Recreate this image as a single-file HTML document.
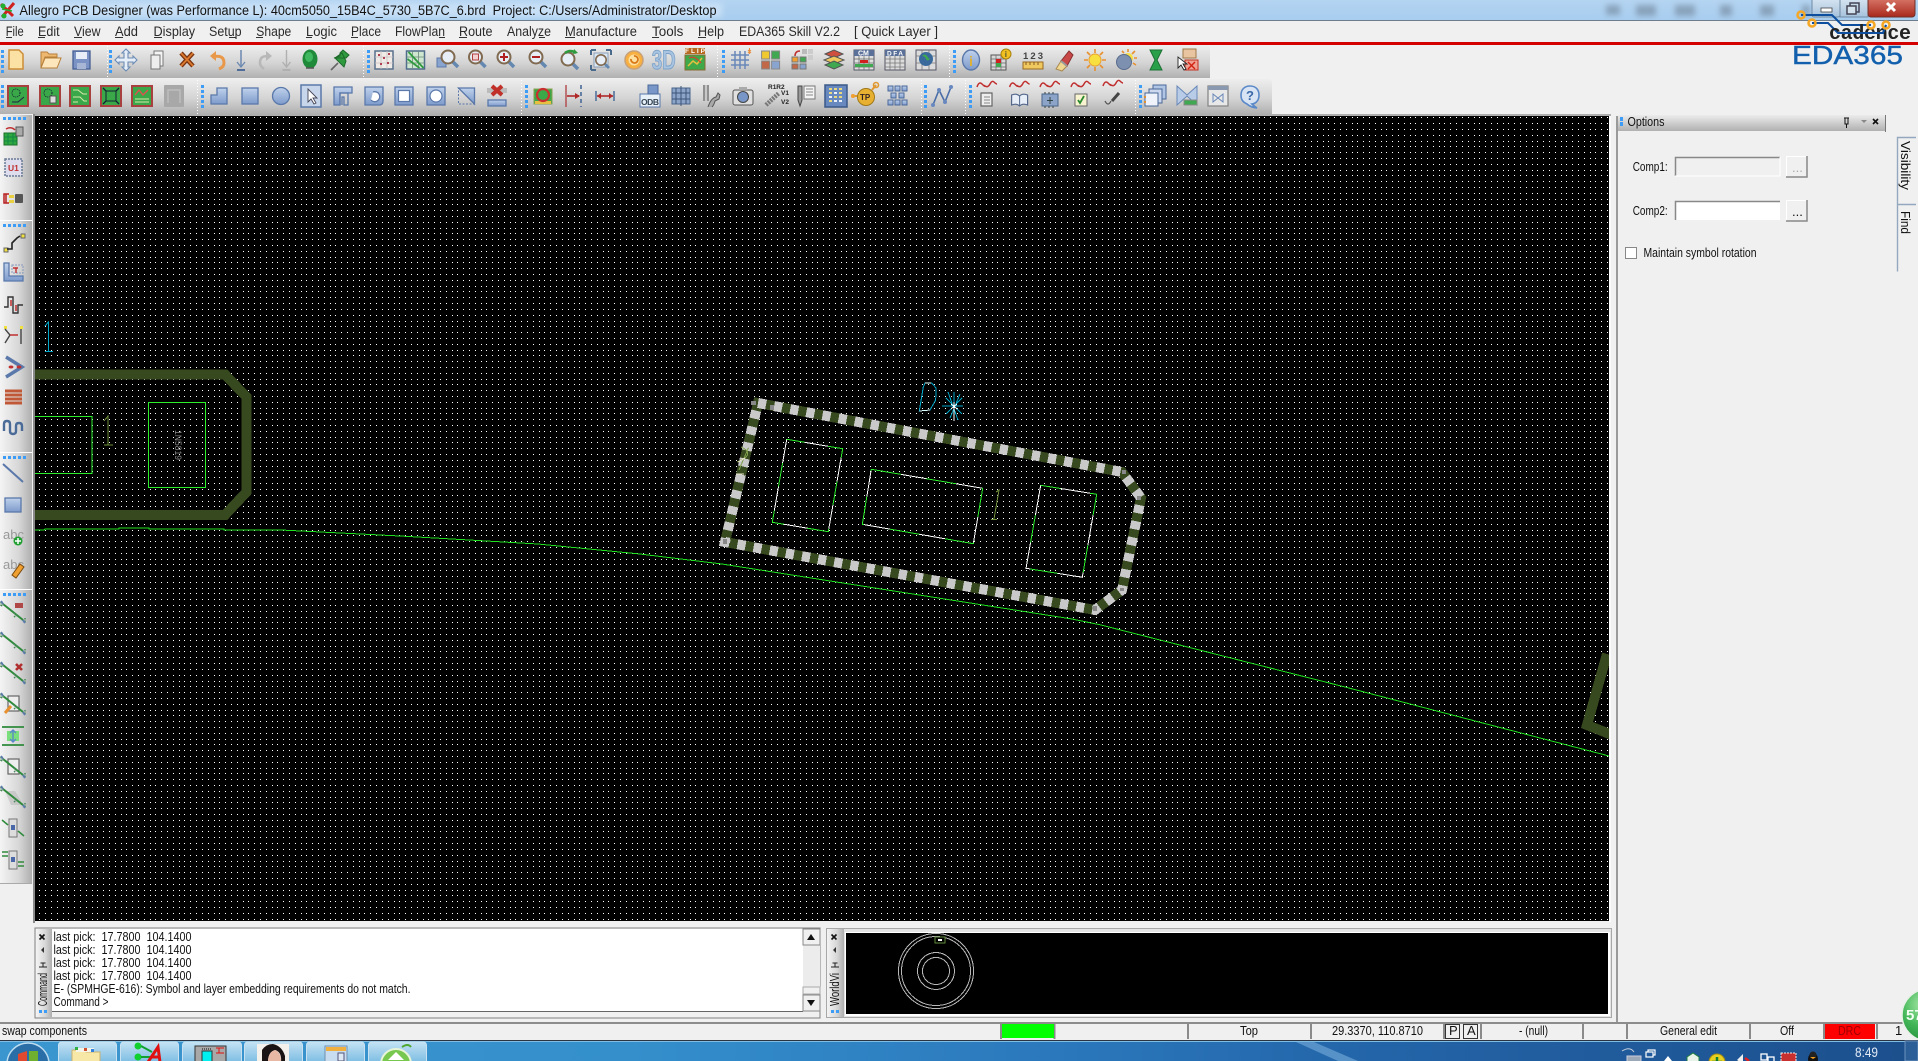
<!DOCTYPE html>
<html><head><meta charset="utf-8"><title>Allegro PCB Designer</title>
<style>
html,body{margin:0;padding:0;background:#f0f0f0;width:1918px;height:1061px;overflow:hidden}
svg{display:block;position:absolute;left:0;top:0}
text{font-family:"Liberation Sans",sans-serif;font-size:13px;fill:#111;white-space:pre}
.m{font-size:13.500px;fill:#2a2a2a}
.b{fill:url(#bl);stroke:#5a78aa;stroke-width:1.3}
.w{fill:#fff;stroke:#5a78aa;stroke-width:1.2}
.g{fill:#3aa848;stroke:#a84040;stroke-width:2}
.n{fill:none;stroke:#2f8a3c;stroke-width:1.2}
.sep{stroke:#8a8a8a;stroke-width:2}
.grip{fill:#3c9cf6}
.dot{stroke:#fff;stroke-width:1;stroke-dasharray:1 2}
.wave{fill:none;stroke:#c03030;stroke-width:1.5}
.doc{fill:#eee;stroke:#666;stroke-width:1.2}
.tb{fill:url(#tbtn);stroke:#c8e2f2;stroke-width:1}
</style></head><body>
<svg width="1918" height="1061" viewBox="0 0 1918 1061" xmlns="http://www.w3.org/2000/svg">
<defs>
<linearGradient id="tt" x1="0" y1="0" x2="0" y2="1"><stop offset="0" stop-color="#b4d4f1"/><stop offset="1" stop-color="#a8cdef"/></linearGradient>
<linearGradient id="tg" x1="0" y1="0" x2="0" y2="1"><stop offset="0" stop-color="#eeeeee"/><stop offset=".55" stop-color="#d4d4d4"/><stop offset="1" stop-color="#b0b0b0"/></linearGradient>
<linearGradient id="lg" x1="0" y1="0" x2="1" y2="0"><stop offset="0" stop-color="#f4f4f4"/><stop offset=".6" stop-color="#d6d6d6"/><stop offset="1" stop-color="#aeaeae"/></linearGradient>
<linearGradient id="hd" x1="0" y1="0" x2="0" y2="1"><stop offset="0" stop-color="#ececec"/><stop offset="1" stop-color="#b0b0b0"/></linearGradient>
<linearGradient id="bl" x1="0" y1="0" x2="0" y2="1"><stop offset="0" stop-color="#c0d2ec"/><stop offset="1" stop-color="#7d9acb"/></linearGradient>
<linearGradient id="task" x1="0" y1="0" x2="1" y2="0"><stop offset="0" stop-color="#3b96cf"/><stop offset=".33" stop-color="#348fcb"/><stop offset=".55" stop-color="#2b78bc"/><stop offset=".72" stop-color="#2364a8"/><stop offset="1" stop-color="#1c4f8c"/></linearGradient>
<linearGradient id="tbtn" x1="0" y1="0" x2="0" y2="1"><stop offset="0" stop-color="#c4e2f4"/><stop offset="1" stop-color="#6fb6df"/></linearGradient>
<linearGradient id="cls" x1="0" y1="0" x2="0" y2="1"><stop offset="0" stop-color="#d8786a"/><stop offset="1" stop-color="#a8281c"/></linearGradient>
<linearGradient id="wb" x1="0" y1="0" x2="0" y2="1"><stop offset="0" stop-color="#d8e6f2"/><stop offset="1" stop-color="#a6c2dc"/></linearGradient>
<radialGradient id="ball" cx=".4" cy=".3" r=".8"><stop offset="0" stop-color="#a8e8a8"/><stop offset=".5" stop-color="#45b85a"/><stop offset="1" stop-color="#1f8a38"/></radialGradient>
<filter id="bf" x="-30%" y="-80%" width="160%" height="260%"><feGaussianBlur stdDeviation="3"/></filter>
<pattern id="grid" x="39" y="117" width="180" height="180" patternUnits="userSpaceOnUse">
<path shape-rendering="crispEdges" fill="none" stroke="#fff" stroke-width="1" stroke-dasharray="1 5 1 5 1 5 1 5 1 4 1 5 1 5 1 5 1 5 1 4 1 5 1 5 1 5 1 5 1 4 1 5 1 5 1 5 1 5 1 4 1 5 1 5 1 5 1 5 1 4 1 5 1 5 1 5 1 5 1 5 1 4" d="M0 .5h180M0 6.5h180M0 12.5h180M0 18.5h180M0 24.5h180M0 29.5h180M0 35.5h180M0 41.5h180M0 47.5h180M0 53.5h180M0 58.5h180M0 64.5h180M0 70.5h180M0 76.5h180M0 82.5h180M0 87.5h180M0 93.5h180M0 99.5h180M0 105.5h180M0 111.5h180M0 116.5h180M0 122.5h180M0 128.5h180M0 134.5h180M0 140.5h180M0 145.5h180M0 151.5h180M0 157.5h180M0 163.5h180M0 169.5h180M0 174.5h180"/>
</pattern>
<clipPath id="cv"><rect x="35" y="116" width="1574" height="805"/></clipPath>
<clipPath id="tk"><rect x="0" y="1041" width="1918" height="20"/></clipPath>
<g id="net"><line x1="-10" y1="-8" x2="10" y2="8" stroke="#2f8a3c" stroke-width="2"/><path d="M-12 -10l3 3m-3 1l3 -2m10 9l3 3m-3 1l4 -3M-12 -10v4M12 6v5" stroke="#4a8a5a" stroke-width="1.5" fill="none" stroke-dasharray="1.5 1"/><line x1="10" y1="8" x2="12" y2="11" stroke="#5a7aa8" stroke-width="2"/><line x1="-10" y1="-8" x2="-12" y2="-11" stroke="#5a7aa8" stroke-width="2"/></g>
<g id="mag"><line x1="4" y1="4" x2="10" y2="10" stroke="#6488b0" stroke-width="3.5"/><circle r="6.5" fill="#e8eef6" stroke="#806a50" stroke-width="2"/></g>
<g id="wv"><path class="wave" d="M-10 -5q2 -6 5 -3t3 2q3 2 5 -2t4 -2t3 2"/></g>
</defs>

<!-- title bar -->
<rect width="1918" height="20" fill="url(#tt)"/>
<rect x="0" y="3" width="722" height="14" fill="#c8e0f6" filter="url(#bf)"/>
<g fill="#6a7d90" opacity=".55" filter="url(#bf)"><rect x="1606" y="5" width="14" height="10"/><rect x="1636" y="5" width="20" height="11"/><rect x="1675" y="5" width="20" height="11"/><rect x="1720" y="5" width="12" height="11"/><rect x="1760" y="5" width="14" height="11"/><rect x="1802" y="5" width="8" height="11"/></g>
<rect y="20" width="1918" height="1" fill="#6d7d8d"/>
<g transform="translate(8,10)"><path d="M-7 -6l12 12M6 -7L-6 7" stroke="#d02020" stroke-width="3"/><circle cx="-5" cy="-4" r="2.5" fill="#20b030"/><circle cx="-4" cy="6" r="2.5" fill="#20b030"/><path d="M-6 -1l10 2" stroke="#20b030" stroke-width="1.5"/></g>
<text x="19.5" y="15" style="font-size:13.500px;fill:#111" textLength="697" lengthAdjust="spacingAndGlyphs">Allegro PCB Designer (was Performance L): 40cm5050_15B4C_5730_5B7C_6.brd  Project: C:/Users/Administrator/Desktop</text>
<!-- window controls -->
<rect x="1812" y="-2" width="28" height="19" rx="2" fill="url(#wb)" stroke="#6f8aa4"/>
<rect x="1821" y="8" width="11" height="4" fill="#fff" stroke="#444" stroke-width=".8"/>
<rect x="1840" y="-2" width="28" height="19" fill="url(#wb)" stroke="#6f8aa4"/>
<rect x="1850" y="3" width="9" height="9" fill="none" stroke="#445" stroke-width="1.5"/><rect x="1847" y="6" width="9" height="8" fill="#d4e2ee" stroke="#445" stroke-width="1.5"/>
<rect x="1868" y="-2" width="47" height="19" rx="3" fill="url(#cls)" stroke="#70302a"/>
<path d="M1887 3l8 8M1895 3l-8 8" stroke="#fff" stroke-width="3"/>

<!-- menu -->
<rect y="21" width="1918" height="21" fill="#f0f0f0"/>
<g class="mm">
<text class="m" x="5.7" y="36" textLength="18" lengthAdjust="spacingAndGlyphs">File</text>
<text class="m" x="38" y="36" textLength="21.6" lengthAdjust="spacingAndGlyphs">Edit</text>
<text class="m" x="74" y="36" textLength="26.5" lengthAdjust="spacingAndGlyphs">View</text>
<text class="m" x="115" y="36" textLength="23" lengthAdjust="spacingAndGlyphs">Add</text>
<text class="m" x="153.5" y="36" textLength="41.6" lengthAdjust="spacingAndGlyphs">Display</text>
<text class="m" x="209" y="36" textLength="32.6" lengthAdjust="spacingAndGlyphs">Setup</text>
<text class="m" x="256.3" y="36" textLength="35" lengthAdjust="spacingAndGlyphs">Shape</text>
<text class="m" x="306" y="36" textLength="31" lengthAdjust="spacingAndGlyphs">Logic</text>
<text class="m" x="351" y="36" textLength="30" lengthAdjust="spacingAndGlyphs">Place</text>
<text class="m" x="395" y="36" textLength="50" lengthAdjust="spacingAndGlyphs">FlowPlan</text>
<text class="m" x="459" y="36" textLength="33.5" lengthAdjust="spacingAndGlyphs">Route</text>
<text class="m" x="507" y="36" textLength="44" lengthAdjust="spacingAndGlyphs">Analyze</text>
<text class="m" x="565" y="36" textLength="72" lengthAdjust="spacingAndGlyphs">Manufacture</text>
<text class="m" x="652" y="36" textLength="31.4" lengthAdjust="spacingAndGlyphs">Tools</text>
<text class="m" x="698" y="36" textLength="26" lengthAdjust="spacingAndGlyphs">Help</text>
<text class="m" x="739" y="36" textLength="101" lengthAdjust="spacingAndGlyphs">EDA365 Skill V2.2</text>
<text class="m" x="854" y="36" textLength="84" lengthAdjust="spacingAndGlyphs">[ Quick Layer ]</text>
</g>
<path stroke="#333" stroke-width="1" shape-rendering="crispEdges" d="M6 37.5h6M38 37.5h7M74 37.5h8M115 37.5h8M154 37.5h8M229 37.5h7M256 37.5h7M306 37.5h6M351 37.5h7M439 37.5h6M459 37.5h8M539 37.5h6M565 37.5h10M652 37.5h7M698 37.5h8"/>
<rect y="42" width="1918" height="3" fill="#d40000"/>

<!-- toolbars bg -->
<path d="M0 45H1206q4 0 4 4V78H0z" fill="url(#tg)"/>
<path d="M0 79H1268q4 0 4 4V114H0z" fill="url(#tg)"/>
<g class="dot" shape-rendering="crispEdges"><line x1="107.5" y1="46" x2="107.5" y2="78" class="dot"/><line x1="363.5" y1="46" x2="363.5" y2="78" class="dot"/><line x1="717.5" y1="46" x2="717.5" y2="78" class="dot"/><line x1="949.5" y1="46" x2="949.5" y2="78" class="dot"/><line x1="197.5" y1="80" x2="197.5" y2="114" class="dot"/><line x1="521.5" y1="80" x2="521.5" y2="114" class="dot"/><line x1="921.5" y1="80" x2="921.5" y2="114" class="dot"/><line x1="965.5" y1="80" x2="965.5" y2="114" class="dot"/><line x1="1135.5" y1="80" x2="1135.5" y2="114" class="dot"/></g>
<g class="grip" shape-rendering="crispEdges">
<path d="M1 50h3v3h-3zM1 55h3v3h-3zM1 60h3v3h-3zM1 65h3v3h-3zM1 70h3v3h-3zM109 50h3v3h-3zM109 55h3v3h-3zM109 60h3v3h-3zM109 65h3v3h-3zM109 70h3v3h-3zM367 50h3v3h-3zM367 55h3v3h-3zM367 60h3v3h-3zM367 65h3v3h-3zM367 70h3v3h-3zM722 50h3v3h-3zM722 55h3v3h-3zM722 60h3v3h-3zM722 65h3v3h-3zM722 70h3v3h-3zM953 50h3v3h-3zM953 55h3v3h-3zM953 60h3v3h-3zM953 65h3v3h-3zM953 70h3v3h-3z"/>
<path d="M1 85h3v3h-3zM1 90h3v3h-3zM1 95h3v3h-3zM1 100h3v3h-3zM1 105h3v3h-3zM201 85h3v3h-3zM201 90h3v3h-3zM201 95h3v3h-3zM201 100h3v3h-3zM201 105h3v3h-3zM525 85h3v3h-3zM525 90h3v3h-3zM525 95h3v3h-3zM525 100h3v3h-3zM525 105h3v3h-3zM924 85h3v3h-3zM924 90h3v3h-3zM924 95h3v3h-3zM924 100h3v3h-3zM924 105h3v3h-3zM969 85h3v3h-3zM969 90h3v3h-3zM969 95h3v3h-3zM969 100h3v3h-3zM969 105h3v3h-3zM1139 85h3v3h-3zM1139 90h3v3h-3zM1139 95h3v3h-3zM1139 100h3v3h-3zM1139 105h3v3h-3z"/>
</g>

<!-- row 1 icons -->
<g transform="translate(16,60)"><path d="M-7 -10H3L7 -6V9H-7z" fill="#fbe2a4" stroke="#cc8c38" stroke-width="1.5"/></g>
<g transform="translate(50,60)"><path d="M-9 -8h6l2 2h8v3H-5L-9 8z" fill="#eeb870" stroke="#b8803a"/><path d="M-9 8L-5 -2H11L7 8z" fill="#fde6bc" stroke="#b8803a"/></g>
<g transform="translate(81,60)"><rect x="-8" y="-9" width="17" height="18" fill="#7b93c4" stroke="#465f94" stroke-width="1.3"/><rect x="-5" y="-8" width="11" height="7" fill="#e8eef8"/><rect x="-4" y="3" width="9" height="6" fill="#a6b6d4"/></g>
<g transform="translate(126,60)"><path d="M0 -11l4 4h-2v5h5v-2l4 4l-4 4v-2H2v5h2l-4 4l-4 -4h2V2H-7v2l-4 -4l4 -4v2h5V-7H-4z" fill="#e6eef8" stroke="#6c8cb4" stroke-width="1.1"/></g>
<g transform="translate(157,60)"><path d="M-3 -9H6V6H-3z" fill="#f4f4f4" stroke="#777"/><path d="M-6 -5H3V9H-6z" fill="#eee" stroke="#777"/></g>
<g transform="translate(187,60)"><path d="M-6 -7L6 6M6 -7L-6 6" stroke="#7a3410" stroke-width="4.5"/><path d="M-6 -7L6 6M6 -7L-6 6" stroke="#dc7a30" stroke-width="1.8"/></g>
<g transform="translate(218,60)"><path d="M-6 -3Q6 -6 6 3Q6 7 1 9" fill="none" stroke="#e89848" stroke-width="3"/><path d="M-2 -9l-6 5l6 5z" fill="#e89848"/></g>
<g transform="translate(241,60)"><path d="M0 -10V6" stroke="#6c88b0" stroke-width="1.5"/><path d="M-4 2L0 7L4 2" fill="none" stroke="#6c88b0" stroke-width="1.3"/><path d="M-4 10H4" stroke="#506c98" stroke-width="2"/></g>
<g transform="translate(265,60)"><path d="M5 -3Q-5 -6 -5 3Q-5 6 -1 9" fill="none" stroke="#b8b8b8" stroke-width="2.6"/><path d="M1 -9l6 5l-6 5z" fill="#b8b8b8"/></g>
<g transform="translate(286.5,60)"><path d="M0 -10V6M-4 2L0 7L4 2" fill="none" stroke="#b0b0b0" stroke-width="1.4"/><path d="M-4 10H4" stroke="#b0b0b0" stroke-width="2"/></g>
<g transform="translate(310,60)"><ellipse cx="0" cy="-1" rx="7.5" ry="9.5" fill="#1f8a3a"/><ellipse cx="-1" cy="-3" rx="4" ry="5" fill="#40b860"/><path d="M-4 8h8" stroke="#555" stroke-width="1.5"/></g>
<g transform="translate(340,60)"><path d="M-9 10L-2 3" stroke="#666" stroke-width="1.6"/><path d="M-6 -2L6 -2L9 -5L3 -10L0 -7V-4z M-5 -2L4 7L6 1L2 -7z" fill="#2f9a3e" stroke="#1c6a2a"/></g>
<g transform="translate(384,60)"><rect x="-9" y="-9" width="18" height="18" fill="#f0ebe6" stroke="#58708c" stroke-width="1.5"/><path d="M-9 -3H9M-9 3H9M-3 -9V9M3 -9V9" stroke="#c8c0c0" stroke-width=".8"/><path d="M-6 -5h2M-1 -2h2M3 3h2M-4 4h2M4 -6h2" stroke="#b04050" stroke-width="2"/></g>
<g transform="translate(415.5,60)"><rect x="-9" y="-9" width="18" height="18" fill="#cfe6cf" stroke="#506c8c" stroke-width="1.5"/><path d="M-9 -3H9M-9 3H9M-3 -9V9M3 -9V9" stroke="#6a8a7a" stroke-width=".8"/><path d="M-7 -8L8 8M-8 -1L4 8" stroke="#2f9a3e" stroke-width="1.8"/></g>
<g transform="translate(447,60)"><rect x="-10" y="-2" width="9" height="9" fill="#8aa4d0" stroke="#5a78aa"/><use href="#mag" x="1" y="-3"/></g>
<g transform="translate(477.5,60)"><use href="#mag" x="-2" y="-3"/><rect x="-5" y="-6" width="6" height="6" fill="#f4d0d0" stroke="#b04040"/></g>
<g transform="translate(506,60)"><use href="#mag" x="-2" y="-3"/><path d="M-6 -3H2M-2 -7V1" stroke="#b02020" stroke-width="2"/></g>
<g transform="translate(538,60)"><use href="#mag" x="-2" y="-3"/><path d="M-6 -3H2" stroke="#b02020" stroke-width="2"/></g>
<g transform="translate(570,60)"><use href="#mag" x="-2" y="-1"/><path d="M-5 -7Q0 -11 6 -7" fill="none" stroke="#2f9a3e" stroke-width="2.5"/><path d="M4 -11l4 4l-5 1z" fill="#2f9a3e"/></g>
<g transform="translate(601,60)"><path d="M-10 -10h5M-10 -10v5M10 -10h-5M10 -10v5M-10 10v-5M-10 10h5" stroke="#4a6a8c" stroke-width="2" fill="none"/><rect x="-7" y="-7" width="14" height="14" fill="#dce8f4" stroke="#8aa0b8"/><use href="#mag" x="0" y="0" transform="scale(.8)"/></g>
<g transform="translate(634,60)"><circle r="9" fill="#f8b040" stroke="#c8a078" stroke-width="1.5"/><circle r="5.5" fill="#fde0a0"/><path d="M-3 -1a3.5 3.5 0 1 0 3 -3" fill="none" stroke="#d87818" stroke-width="1.8"/></g>
<g transform="translate(663.7,60)"><text x="-12" y="9" style="font-size:27px;font-weight:bold;fill:#a8c4e0;stroke:#7ea2c8;stroke-width:1" textLength="24" lengthAdjust="spacingAndGlyphs">3D</text></g>
<g transform="translate(695,60)"><rect x="-10" y="-12" width="20" height="6" fill="#b86a20"/><text x="-10" y="-7" style="font-size:6.5px;font-weight:bold;fill:#fff" textLength="20">FLIP</text><rect x="-10" y="-5" width="20" height="15" fill="#3fa848" stroke="#8a6a30"/><path d="M-7 6L-2 1L2 4L7 -2" fill="none" stroke="#e8c040" stroke-width="1.5"/><path d="M-6 -2Q0 -5 6 3" fill="none" stroke="#d04030" stroke-width="1.2"/></g>
<g transform="translate(740,60)"><path d="M-9 -5H9M-9 0H9M-9 5H9M-5 -9V9M0 -9V9M5 -9V9" stroke="#6a88b8" stroke-width="1.5"/><path d="M8 -10l3 3M11 -10l-3 3M9.5 -12v6" stroke="#e89040" stroke-width="1"/></g>
<g transform="translate(770.6,60)"><rect x="-9" y="-9" width="8" height="8" fill="#f0c830" stroke="#888"/><rect x="1" y="-9" width="8" height="8" fill="#40a850" stroke="#888"/><rect x="-9" y="1" width="8" height="8" fill="#c06848" stroke="#888"/><rect x="1" y="1" width="8" height="8" fill="#8aa4d0" stroke="#888"/></g>
<g transform="translate(802,60)"><rect x="-10" y="-3" width="6" height="5" fill="#f0a030" stroke="#777"/><rect x="-2" y="-3" width="6" height="5" fill="#40a850" stroke="#777"/><rect x="-10" y="4" width="6" height="5" fill="#c06848" stroke="#777"/><rect x="-2" y="4" width="6" height="5" fill="#8aa4d0" stroke="#777"/><rect x="0" y="-11" width="5" height="5" fill="#bbb"/><rect x="6" y="-11" width="5" height="5" fill="#ccc"/><rect x="6" y="-5" width="5" height="5" fill="#ccc"/><path d="M-7 -4Q-7 -9 -2 -9" fill="none" stroke="#c03030" stroke-width="1.5"/></g>
<g transform="translate(834,60)"><path d="M-9 -6L0 -10L9 -6L0 -2z" fill="#d05040" stroke="#555"/><path d="M-10 0L0 -4L10 0L0 4z" fill="#f0c860" stroke="#555"/><path d="M-9 5L0 1L9 5L0 9z" fill="#40a850" stroke="#555"/></g>
<g transform="translate(864,60)"><rect x="-10" y="-10" width="20" height="20" fill="#e0e0e0" stroke="#556"/><rect x="-10" y="-10" width="20" height="6" fill="#5a7098"/><text x="-6" y="-4.5" style="font-size:7px;font-weight:bold;fill:#fff">CM</text><path d="M-10 -1H10M-10 3H10M-10 7H10M-5 -4V10M0 -4V10M5 -4V10" stroke="#666" stroke-width=".7"/><rect x="-4" y="0" width="8" height="3" fill="#d02020"/><rect x="-9" y="4" width="18" height="3" fill="#40a850"/></g>
<g transform="translate(895,60)"><rect x="-10" y="-10" width="20" height="20" fill="#dcdcdc" stroke="#556"/><rect x="-10" y="-10" width="20" height="6" fill="#5a7098"/><text x="-8" y="-4.5" style="font-size:6.5px;font-weight:bold;fill:#fff" textLength="16">DFA</text><path d="M-10 -1H10M-10 3H10M-10 7H10M-5 -4V10M0 -4V10M5 -4V10" stroke="#777" stroke-width=".8"/></g>
<g transform="translate(926,60)"><rect x="-10" y="-10" width="20" height="20" fill="#dcdcdc" stroke="#556"/><path d="M-10 -4H10M-10 3H10M-4 -10V10M3 -10V10" stroke="#777" stroke-width=".8"/><circle cx="0" cy="-1" r="7" fill="#3a6a9c"/><path d="M-4 -4q3 -3 5 0t3 3q-3 3 -4 0t-4 -3" fill="#40a850"/></g>
<g transform="translate(971,60)"><ellipse rx="8.5" ry="10" fill="url(#bl)" stroke="#5a78aa" stroke-width="1.4"/><text x="-2" y="6" style="font-size:14px;font-weight:bold;fill:#e0b030">i</text></g>
<g transform="translate(1000,60)"><rect x="-9" y="-5" width="15" height="15" fill="#d8d8d8" stroke="#555"/><path d="M-9 -1H6M-9 3H6M-9 7H6M-4 -5V10M1 -5V10" stroke="#666" stroke-width=".7"/><rect x="-4" y="-1" width="5" height="4" fill="#d02020"/><rect x="-4" y="3" width="5" height="4" fill="#40a850"/><circle cx="6" cy="-6" r="5" fill="#f0c020" stroke="#a88010"/><text x="4.8" y="-3" style="font-size:8px;font-weight:bold;fill:#553">i</text></g>
<g transform="translate(1033,60)"><text x="-10" y="-1" style="font-size:9.5px;fill:#444;font-weight:bold" textLength="20">123</text><rect x="-10" y="2" width="20" height="7" fill="#f0c860" stroke="#9a6a20"/><path d="M-7 2v3M-3 2v3M1 2v3M5 2v3" stroke="#8a5a20"/></g>
<g transform="translate(1064,60)"><path d="M-8 9L-3 1L3 6L-2 11z" fill="#f0d890" stroke="#aa8a50"/><path d="M-3 1L5 -9L9 -5L3 6z" fill="#c84848" stroke="#883030"/><path d="M-3 1L3 6" stroke="#999" stroke-width="2"/></g>
<g transform="translate(1095,60)"><path d="M0 -11V-7M0 7V11M-11 0H-7M7 0H11M-8 -8L-5 -5M8 -8L5 -5M-8 8L-5 5M8 8L5 5" stroke="#e89030" stroke-width="1.6"/><circle r="6" fill="#f8e040" stroke="#e8a030"/></g>
<g transform="translate(1126,60)"><path d="M2 -11V-8M11 -2H8M9 -9L6 -6M-4 -9L-2 -7M10 5L7 3" stroke="#e89030" stroke-width="1.6"/><circle cx="2" cy="-2" r="5" fill="#f8e040"/><circle cx="-2" cy="2" r="7.5" fill="#7e90b0" stroke="#5a6c8c"/></g>
<g transform="translate(1156,60)"><path d="M-6 -10H6L1 0L6 10H-6L-1 0z" fill="#2aa04a" stroke="#1c7034"/></g>
<g transform="translate(1188,60)"><rect x="-5" y="-11" width="13" height="9" fill="#e8c4a0" stroke="#a07848"/><rect x="-3" y="0" width="13" height="10" fill="#f0a090" stroke="#c03020"/><path d="M0 2L7 9M7 2L0 9" stroke="#d02010" stroke-width="1.4"/><path d="M-10 -3V8L-7 5L-4 10L-2 9L-5 4H-1z" fill="#fff" stroke="#222" stroke-width=".9"/></g>

<!-- row 2 icons -->
<g transform="translate(18,96)"><rect x="-10" y="-10" width="20" height="20" class="g"/><circle cx="-2" cy="-3" r="4" fill="none" stroke="#123" stroke-dasharray="1 1"/><path d="M-6 6H0L6 1" stroke="#224" fill="none"/></g>
<g transform="translate(50,96)"><rect x="-10" y="-10" width="20" height="20" class="g"/><circle cx="-2" cy="-3" r="4" fill="none" stroke="#123" stroke-dasharray="1 1"/><rect x="0" y="0" width="6" height="7" fill="#ddd" stroke="#555"/></g>
<g transform="translate(80,96)"><rect x="-10" y="-10" width="20" height="20" class="g"/><path d="M-7 -6H-2L3 -2H7M-7 1H0L4 5H7M-7 6H-2" stroke="#d8e8a8" fill="none"/></g>
<g transform="translate(111,96)"><rect x="-10" y="-10" width="20" height="20" class="g"/><rect x="-5" y="-5" width="10" height="10" fill="none" stroke="#123"/><path d="M-8 -8l3 3M8 -8l-3 3M-8 8l3 -3M8 8l-3 -3" stroke="#123" stroke-width="1.3"/></g>
<g transform="translate(142,96)"><rect x="-10" y="-10" width="20" height="20" class="g"/><path d="M-7 -1L-3 -6L1 -1L6 -6" stroke="#e05050" stroke-width="1.4" fill="none"/><path d="M-7 3H7M-7 6H7" stroke="#d8e8a8"/></g>
<rect x="164" y="85" width="20" height="22" rx="1" fill="#a8a8a8"/><path d="M168 103V90H180V103" fill="none" stroke="#bebebe" stroke-width="1.5"/>
<g transform="translate(219,96)"><path d="M-8 8V-1h6v-7H8V8z" class="b"/></g>
<g transform="translate(250,96)"><rect x="-8" y="-8" width="16" height="16" class="b"/></g>
<g transform="translate(281,96)"><circle r="8.5" class="b"/></g>
<g transform="translate(311,96)"><rect x="-10" y="-11" width="20" height="22" fill="#c8d6ec" stroke="#5a78aa" stroke-width="1.5"/><path d="M-3 -7V6L0 3L3 8L5 7L2 2H6z" fill="#fff" stroke="#445" stroke-width=".9"/></g>
<g transform="translate(343,96)"><path d="M-9 9V-9H9V-3H-3V9z" class="b"/><path d="M-3 9V-3H5V9H1V1H-1V9" fill="none" stroke="#5a78aa" stroke-width="1.3"/></g>
<g transform="translate(374,96)"><path d="M-9 -9H9V5Q9 9 5 9H-9z" class="b"/><path d="M-1 -4A5 5 0 1 1 -3 4" fill="#fff" stroke="#5a78aa" stroke-width="1.3"/></g>
<g transform="translate(404,96)"><rect x="-9" y="-9" width="18" height="18" class="b"/><rect x="-5.5" y="-5.5" width="11" height="11" class="w"/></g>
<g transform="translate(436,96)"><rect x="-9" y="-9" width="18" height="18" class="b"/><circle r="6" class="w"/></g>
<g transform="translate(466.5,96)"><path d="M-8 -8H8V8H-8z" fill="none" stroke="#5a78aa" stroke-dasharray="2 1.5"/><path d="M-8 -8H8V8z" class="b"/></g>
<g transform="translate(497,96)"><rect x="-10" y="-8" width="20" height="5" fill="#bbb"/><path d="M-5 -10L5 -1M5 -10L-5 -1" stroke="#c03028" stroke-width="4"/><rect x="-9" y="4" width="18" height="6" class="b"/></g>
<g transform="translate(543,96)"><rect x="-9" y="-7" width="18" height="15" fill="#3aa848" stroke="#88a050"/><rect x="-8" y="5" width="16" height="3" fill="#e8c040"/><ellipse cx="0" cy="-1" rx="6" ry="6" fill="none" stroke="#c83030" stroke-width="2.2"/></g>
<g transform="translate(573,96)"><path d="M-7 -11V11" stroke="#b04848" stroke-width="1.4"/><path d="M8 -11V11" stroke="#4a6a98" stroke-width="1.6" stroke-dasharray="4 3"/><path d="M-6 0H6" stroke="#b02828" stroke-width="1.6"/><path d="M2 -3L7 0L2 3z" fill="#b02828"/></g>
<g transform="translate(605,96)"><path d="M-9 -5V5M9 -5V5" stroke="#4a6a98" stroke-width="1.5"/><path d="M-8 0H8" stroke="#b02828" stroke-width="1.6"/><path d="M-4 -3L-8 0L-4 3zM4 -3L8 0L4 3z" fill="#b02828"/></g>
<g transform="translate(650,96)"><rect x="-10" y="-2" width="20" height="13" fill="#e8f0f8" stroke="#5a78aa"/><text x="-9" y="9" style="font-size:8.5px;font-weight:bold;fill:#345" textLength="18">ODB</text><rect x="-2" y="-11" width="10" height="9" fill="#7896c8" stroke="#4a6898"/></g>
<g transform="translate(681,96)"><rect x="-9" y="-8" width="18" height="16" fill="#8ca4c8" stroke="#4a648c"/><path d="M-5 -8V8M0 -10V10M5 -8V8M-9 -3H9M-9 3H9" stroke="#3a5478" stroke-width="1"/></g>
<g transform="translate(711,96)"><path d="M-5 -11V5" stroke="#909090" stroke-width="6"/><path d="M-5 -11V5" stroke="#c8c8c8" stroke-width="2"/><path d="M-3 11Q0 2 5 1L7 -3L9 -1L8 3L4 5Q3 9 1 11" fill="#a8a8a8" stroke="#555"/></g>
<g transform="translate(743,96)"><rect x="-10" y="-6" width="20" height="15" rx="2" fill="#e0e0e0" stroke="#555"/><rect x="-4" y="-9" width="8" height="3" fill="#aaa"/><circle cy="1" r="5.5" fill="#7896c8" stroke="#444"/></g>
<g transform="translate(775,96)"><text x="-7" y="-7" style="font-size:6.5px;font-weight:bold;fill:#222">R1R2</text><text x="6" y="-1" style="font-size:6.5px;font-weight:bold;fill:#222">V1</text><text x="6" y="8" style="font-size:6.5px;font-weight:bold;fill:#222">V2</text><path d="M-9 9L4 -3" stroke="#777" stroke-width="4.5" stroke-dasharray="2 1"/></g>
<g transform="translate(805,96)"><path d="M-7 -10V4L-5 10L-3 4V-10z" fill="#9a9a9a" stroke="#444"/><rect x="-1" y="-10" width="11" height="13" fill="#f4f4f4" stroke="#777"/><path d="M1 -7H8M1 -4H8M1 -1H8" stroke="#888"/></g>
<g transform="translate(836,96)"><rect x="-11" y="-11" width="22" height="22" fill="#6888c0" stroke="#3a5888" stroke-width="1.5"/><path d="M-7 -7h3M-2 -7h3M3 -7h3M-7 -3h3M3 -3h3M-2 1h3M3 1h3M-7 5h3" stroke="#e8d880" stroke-width="2"/><path d="M-2 -3h3M-7 1h3M-2 5h3M3 5h3" stroke="#e8f0f8" stroke-width="2"/></g>
<g transform="translate(866,96)"><path d="M-13 0H-6M6 -6L10 -11" stroke="#e09830" stroke-width="2"/><circle cx="-13" cy="0" r="2" fill="#f0a030"/><circle cx="10" cy="-11" r="2.5" fill="none" stroke="#e09830" stroke-width="1.6"/><circle cy="1" r="8.5" fill="#e8b030" stroke="#a07818"/><text x="-6" y="4" style="font-size:8px;font-weight:bold;fill:#322">TP</text></g>
<g transform="translate(897,96)" fill="url(#bl)" stroke="#4a6898"><rect x="-9" y="-10" width="5" height="5"/><rect x="-2" y="-10" width="5" height="5"/><rect x="5" y="-10" width="5" height="5"/><rect x="-6" y="-3" width="5" height="5"/><rect x="2" y="-3" width="5" height="5"/><rect x="-9" y="4" width="5" height="5"/><rect x="-2" y="4" width="5" height="5"/><rect x="5" y="4" width="5" height="5"/></g>
<g transform="translate(942,96)"><path d="M-9 9L-3 -6L3 6L9 -9" fill="none" stroke="#4a6ea8" stroke-width="1.6"/><circle cx="-9" cy="9" r="2" fill="#6888c0"/><circle cx="-3" cy="-6" r="2" fill="#6888c0"/><circle cx="3" cy="6" r="2" fill="#6888c0"/><circle cx="9" cy="-9" r="2" fill="#6888c0"/></g>
<g transform="translate(987,96)"><use href="#wv" y="-4"/><path d="M-6 -3H5V10H-6z" class="doc"/><path d="M-3 1H3M-3 4H3M-3 7H3" stroke="#888"/></g>
<g transform="translate(1019.6,96)"><use href="#wv" y="-4"/><path d="M-8 -1Q-3 -3 0 0Q3 -3 8 -1V9Q3 7 0 10Q-3 7 -8 9z" fill="#e8eef8" stroke="#55688c" stroke-width="1.2"/><path d="M0 0V10" stroke="#55688c"/></g>
<g transform="translate(1050,96)"><use href="#wv" y="-4"/><rect x="-8" y="-2" width="16" height="12" fill="#8ca4c8" stroke="#4a648c"/><path d="M-5 -4v2M-1 -4v2M3 -4v2M-5 10v2M-1 10v2M3 10v2M0 1V8M-3 4.5H3" stroke="#344"/></g>
<g transform="translate(1081,96)"><use href="#wv" y="-4"/><rect x="-6" y="-2" width="12" height="12" fill="#f8f4d0" stroke="#666"/><path d="M-3 4L-1 7L3 0" fill="none" stroke="#2a8a30" stroke-width="1.8"/></g>
<g transform="translate(1113,96)"><use href="#wv" y="-5"/><path d="M6 -3L-1 5" stroke="#444" stroke-width="3"/><path d="M-2 5Q-5 11 -8 5" fill="none" stroke="#555" stroke-width="1.3"/></g>
<g transform="translate(1155,96)"><rect x="-2" y="-11" width="13" height="14" fill="#b0c4e4" stroke="#4a6898"/><rect x="-6" y="-7" width="13" height="14" fill="#ccd8ee" stroke="#4a6898"/><rect x="-10" y="-3" width="13" height="13" fill="#f0f4fa" stroke="#4a6898"/><path d="M-10 0v2M-10 5v2" stroke="#e09030" stroke-width="2"/></g>
<g transform="translate(1187,96)"><path d="M-10 -10L0 -1L10 -10V9L0 0L-10 9z" fill="#b8cce8" stroke="#6888b8"/><rect x="-3" y="4" width="13" height="5" fill="#40a850" stroke="#888"/></g>
<g transform="translate(1218,96)"><rect x="-10" y="-10" width="20" height="20" fill="#e8e8e8" stroke="#888" stroke-width="1.3"/><rect x="-10" y="-10" width="20" height="4" fill="#8a98b0"/><path d="M-5 -2L0 2L5 -2V6L0 2L-5 6z" fill="none" stroke="#6888b8"/></g>
<g transform="translate(1250,96)"><path d="M0 -10C7 -10 9 -5 9 -1C9 6 4 8 2 8Q5 11 7 12Q0 11 -3 8C-7 6 -9 4 -9 -1C-9 -6 -6 -10 0 -10z" fill="#d8e4f4" stroke="#5a88c8" stroke-width="1.6"/><text x="-4" y="4" style="font-size:13px;font-weight:bold;fill:#3a68a8">?</text></g>

<!-- Cadence logo -->
<path d="M1801 15H1832L1842 25H1871M1812 23H1828L1838 33H1883L1886 25" fill="none" stroke="#0d4f9e" stroke-width="2"/>
<text x="1829" y="39" style="font-size:20px;font-weight:bold;font-family:'Liberation Mono',monospace;fill:#222" textLength="82" lengthAdjust="spacing">cadence</text>
<path d="M1838 33H1883L1886 25" fill="none" stroke="#0d4f9e" stroke-width="2"/>
<g fill="none" stroke="#f5a623" stroke-width="2.5"><circle cx="1801" cy="15" r="3.5"/><circle cx="1812" cy="23" r="3.5"/><circle cx="1871" cy="25" r="3.5"/><circle cx="1886" cy="25" r="3.5"/></g>
<text x="1792" y="64" style="font-size:26px;fill:#1260ad;stroke:#1260ad;stroke-width:.4" textLength="111" lengthAdjust="spacingAndGlyphs">EDA365</text>

<!-- left toolbars -->
<rect x="0" y="115" width="32" height="105" fill="url(#lg)"/><rect x="0" y="221" width="32" height="231" fill="url(#lg)"/><rect x="0" y="453" width="32" height="136" fill="url(#lg)"/><rect x="0" y="590" width="32" height="293" fill="url(#lg)"/>
<path d="M0 220.5H32M0 452.5H32M0 589.5H32" stroke="#fff" shape-rendering="crispEdges"/><path d="M0 883.5H32" stroke="#aaa" shape-rendering="crispEdges"/>
<path class="grip" shape-rendering="crispEdges" d="M3 117h3v3h-3zM8 117h3v3h-3zM13 117h3v3h-3zM18 117h3v3h-3zM23 117h3v3h-3zM3 224h3v3h-3zM8 224h3v3h-3zM13 224h3v3h-3zM18 224h3v3h-3zM23 224h3v3h-3zM3 456h3v3h-3zM8 456h3v3h-3zM13 456h3v3h-3zM18 456h3v3h-3zM23 456h3v3h-3zM3 593h3v3h-3zM8 593h3v3h-3zM13 593h3v3h-3zM18 593h3v3h-3zM23 593h3v3h-3z"/>
<g transform="translate(13,137)"><rect x="-9" y="-4" width="13" height="12" fill="#30a840" stroke="#1a7028"/><path d="M-9 0H4M-9 4H4M-5 -4V8M0 -4V8" stroke="#184"/><rect x="3" y="-10" width="7" height="9" fill="#aaa" stroke="#555"/><path d="M-7 -8Q-2 -11 2 -7" fill="none" stroke="#c03030" stroke-width="1.5"/></g>
<g transform="translate(13,167)"><rect x="-8" y="-8" width="17" height="17" fill="#dde" stroke="#6a7a94" stroke-width="1.5" stroke-dasharray="2 1"/><text x="-5" y="4" style="font-size:8.5px;fill:#c03030;font-weight:bold">U1</text></g>
<g transform="translate(13,198)"><path d="M-9 -4h2v9h-2zM-7 -4h3M-7 5h3" stroke="#b82020" stroke-width="1.5" fill="none"/><rect x="-4" y="-3" width="5" height="3" fill="#e8d040"/><rect x="-4" y="2" width="5" height="3" fill="#e8d040"/><rect x="2" y="-4" width="8" height="9" rx="1" fill="#555"/></g>
<g transform="translate(13,243)"><rect x="8" y="-9" width="4" height="4" fill="#f0e040" stroke="#666"/><rect x="-9" y="5" width="4" height="4" fill="#f0e040" stroke="#666"/><path d="M-6 6H-1V0L4 -5L7 -7" fill="none" stroke="#222" stroke-width="1.6"/></g>
<g transform="translate(13,273)"><path d="M-9 -10V8H10V3H-4V-10z" class="b"/><rect x="-1" y="-8" width="11" height="8" fill="none" stroke="#8899bb" stroke-dasharray="2 1"/><path d="M0 -5H5M3 -5V0" stroke="#c03030" stroke-width="1.4"/></g>
<g transform="translate(13,305)"><path d="M-9 2H-5V-8H0V8H5V0H10" fill="none" stroke="#333" stroke-width="1.4"/><path d="M-2 -5V1M3 0V6" stroke="#c03030" stroke-width="1.5"/></g>
<g transform="translate(13,335)"><rect x="-9" y="-9" width="3" height="3" fill="#f0e040"/><rect x="7" y="-9" width="3" height="3" fill="#f0e040"/><path d="M-8 -6L-3 0L-8 8M8 -6V9" fill="none" stroke="#444" stroke-width="1.4"/><path d="M-3 0H5" stroke="#c03030" stroke-width="1.5"/></g>
<g transform="translate(13,367)"><path d="M-7 -10L9 0L-7 10" fill="none" stroke="#5a78aa" stroke-width="3.4"/><ellipse cx="-2" cy="0" rx="2.4" ry="1.5" fill="#c03030"/><ellipse cx="6" cy="0" rx="2.4" ry="1.5" fill="#c03030"/></g>
<g transform="translate(13,398)"><path d="M-8 -7H9M-8 -3H9M-8 1H9M-8 5H9" stroke="#c05838" stroke-width="3"/></g>
<g transform="translate(13,428)"><path d="M-9 3V-4Q-9 -7 -6 -7T-3 -4V3Q-3 6 0 6T3 3V-2Q3 -5 6 -5T9 -2V3" fill="none" stroke="#4a6a98" stroke-width="2.4"/></g>
<g transform="translate(13,473)"><line x1="-10" y1="-9" x2="10" y2="9" stroke="#5a78aa" stroke-width="2"/></g>
<g transform="translate(13,505)"><rect x="-8" y="-7" width="16" height="14" class="b"/></g>
<text x="3" y="539" style="font-size:13px;fill:#999">abc</text><circle cx="18" cy="541" r="4.5" fill="#20a030"/><path d="M15 541h6M18 538v6" stroke="#fff" stroke-width="1.5"/>
<text x="3" y="569" style="font-size:13px;fill:#999">abc</text><path d="M12 575L20 564L24 567L16 578z" fill="#f0a030" stroke="#7a4a10"/>
<g transform="translate(13,612)"><use href="#net"/><rect x="2" y="-9" width="8" height="5" fill="#b04848"/></g>
<g transform="translate(13,643)"><use href="#net"/></g>
<g transform="translate(13,673)"><use href="#net"/><path d="M3 -9L9 -3M9 -9L3 -3" stroke="#b03030" stroke-width="2.6"/></g>
<g transform="translate(13,704)"><rect x="-5" y="-8" width="11" height="15" class="doc"/><use href="#net"/><path d="M-8 9L-2 2" stroke="#e89030" stroke-width="3"/></g>
<g transform="translate(13,736)"><rect x="-6" y="-5" width="12" height="10" fill="#7be07b"/><path d="M-11 -9H11M-11 9H11" stroke="#2f8a3c" stroke-width="1.8"/><path d="M0 -6V6M-3 -3L0 -6L3 -3M-3 3L0 6L3 3" fill="none" stroke="#5a88c8" stroke-width="1.4"/></g>
<g transform="translate(13,767)"><rect x="-5" y="-8" width="11" height="15" class="doc"/><use href="#net"/></g>
<g transform="translate(13,797)"><path d="M-8 -6H2L8 4V8H-2z" fill="#bbb" opacity=".6"/><use href="#net"/></g>
<g transform="translate(13,828)"><path d="M-11 -8L-5 -3M11 8L5 3" stroke="#2f8a3c" stroke-width="1.5"/><rect x="-4" y="-9" width="8" height="18" fill="#ddd" stroke="#777"/><rect x="-2" y="-3" width="4" height="5" fill="#4a68a8"/></g>
<g transform="translate(13,860)"><path d="M-11 -8H-5M-11 -4H-5M11 2H5M11 6H5" stroke="#2f8a3c" stroke-width="1.5"/><rect x="-4" y="-9" width="8" height="18" fill="#ddd" stroke="#777"/><rect x="-2" y="-3" width="4" height="5" fill="#4a68a8"/></g>

<!-- canvas frame + canvas -->
<rect x="33" y="114" width="1578" height="2" fill="#aeaeae"/>
<rect x="33" y="114" width="2" height="809" fill="#8a8a8a"/>
<rect x="1609" y="116" width="2" height="806" fill="#fafafa"/>
<rect x="35" y="116" width="1574" height="805" fill="#000"/>
<rect x="35" y="116" width="1574" height="805" fill="url(#grid)"/>
<g clip-path="url(#cv)" shape-rendering="crispEdges" fill="none">
<path d="M30 374.5H225L246.5 397V492L225 515H30" stroke="#37491f" stroke-width="10"/>
<path d="M1607 654L1587 725L1612 735" stroke="#37491f" stroke-width="10"/>
<rect x="20" y="416.5" width="72" height="57" stroke="#2bef2b"/>
<rect x="148.5" y="402.5" width="57" height="85" stroke="#2bef2b"/>
<path d="M104 421L108 416V445M104 445H113" stroke="#6f8f3a"/>
<path d="M45 326L48.5 322V352M45 351.5H53" stroke="#00a6c8"/>
<path d="M35 530H44L45 529H119V528H149V529H224V530H281L400 536L538 544L640 554L722 564L1072 619L1101 625L1345 687L1609 756" stroke="#1fe01f"/>
<path d="M758 403L1122 472L1141 498L1122 590L1095 610L725 542z" stroke="#37491f" stroke-width="10"/>
<path d="M758 403L1122 472L1141 498L1122 590L1095 610L725 542z" stroke="#c9c9c9" stroke-width="10" stroke-dasharray="8.2 8.2"/>
<path d="M786.7 439.3L842.7 448.7L828.3 531.7L772.3 522.3z" stroke="#2bef2b"/>
<path d="M786.7 439.3L842.7 448.7L828.3 531.7L772.3 522.3z" stroke="#fff" stroke-dasharray="24 24" stroke-dashoffset="-18"/>
<path d="M871.3 469.3L982.7 488.3L973.3 543.7L862.3 524.3z" stroke="#2bef2b"/>
<path d="M871.3 469.3L982.7 488.3L973.3 543.7L862.3 524.3z" stroke="#fff" stroke-dasharray="26 30" stroke-dashoffset="-30"/>
<path d="M1040.7 485.3L1096.7 494.3L1082.3 577.3L1026 568.3z" stroke="#2bef2b"/>
<path d="M1040.7 485.3L1096.7 494.3L1082.3 577.3L1026 568.3z" stroke="#fff" stroke-dasharray="30 28" stroke-dashoffset="-20"/>
<path d="M996 492L999 490L994 519M991 519.5H997" stroke="#6f8f3a"/>
<path d="M925 383H931.7L936 388L935.7 400L930 410L919.3 411L923.3 387z" stroke="#00a6c8"/>
<path d="M931 383H925M930 410L919.3 411" stroke="#dff"/>
<path d="M954 392V420M942 406H963M946 398L962 414M962 398L946 414M948 392L958 420M960 394L950 418" stroke="#00a6c8"/>
<path d="M951 404L957 409M957 404L951 409M954 402V421" stroke="#fff"/>
<path d="M739 470Q750 444 748 449M741 447Q752 452 745 458L737 462" stroke="#7f9f4a"/>
<path d="M738 462L745 458M736 474h8" stroke="#e8e8c8"/>
<path d="M751 401h5v4h-5zM770 405h4v5h-4zM1122 470h4v4h-4zM1137 496h4v4h-4zM1120 588h4v3h-4zM1093 606h4v5h-4zM723 539h4v5h-4z" fill="#888" stroke="none"/>
</g>
<text transform="translate(175,430) rotate(90)" style="font-size:9px;fill:#8a8a8a" textLength="30" lengthAdjust="spacingAndGlyphs">1N5819</text>

<!-- options panel -->
<rect x="1616" y="116" width="2" height="906" fill="#9a9a9a"/>
<rect x="1618" y="115" width="267" height="16" fill="url(#hd)"/>
<path d="M1885.5 115V132" stroke="#777"/>
<rect x="1620" y="117" width="3" height="4" fill="#3c9cf6"/><rect x="1620" y="122" width="3" height="4" fill="#3c9cf6"/>
<text x="1627.5" y="126" textLength="37" lengthAdjust="spacingAndGlyphs">Options</text>
<path d="M1844 118h5M1845 118v6h3v-6M1846.5 124v4" fill="none" stroke="#111"/>
<path d="M1861 120h6l-3 3z" fill="#888"/>
<path d="M1873 119l5 5M1878 119l-5 5" stroke="#111" stroke-width="1.6"/>
<text x="1632.7" y="171" textLength="35" lengthAdjust="spacingAndGlyphs">Comp1:</text>
<rect x="1675" y="157" width="105" height="19" fill="#f0f0f0"/><path d="M1675.5 176V157.5H1780" fill="none" stroke="#888" stroke-width="1.5"/><path d="M1780 157V176H1675" fill="none" stroke="#fff"/>
<rect x="1786" y="156" width="21" height="21" fill="#f0f0f0"/><path d="M1786.5 177V156.5H1807" fill="none" stroke="#fff"/><path d="M1807 156V177H1786" fill="none" stroke="#888" stroke-width="1.5"/>
<text x="1792" y="172" style="fill:#aaa">...</text>
<text x="1632.7" y="215" textLength="35" lengthAdjust="spacingAndGlyphs">Comp2:</text>
<rect x="1675" y="201" width="105" height="19" fill="#fff"/><path d="M1675.5 220V201.5H1780" fill="none" stroke="#888" stroke-width="1.5"/>
<rect x="1786" y="200" width="21" height="21" fill="#f0f0f0"/><path d="M1786.5 221V200.5H1807" fill="none" stroke="#fff"/><path d="M1807 200V221H1786" fill="none" stroke="#888" stroke-width="1.5"/>
<text x="1792" y="216">...</text>
<rect x="1625.5" y="247.5" width="11" height="11" fill="#fff" stroke="#888"/>
<text x="1643.5" y="257" textLength="113" lengthAdjust="spacingAndGlyphs">Maintain symbol rotation</text>
<rect x="1897" y="137" width="19" height="134" fill="#f0f0f0"/>
<path d="M1916 137.5H1897.5V271.5M1897 204.5H1916" fill="none" stroke="#93a8bf" stroke-width="1.4"/>
<text transform="translate(1901,141) rotate(90)" textLength="49" lengthAdjust="spacingAndGlyphs">Visibility</text>
<text transform="translate(1901,211) rotate(90)" textLength="23" lengthAdjust="spacingAndGlyphs">Find</text>

<!-- command window -->
<rect x="35" y="928" width="785" height="90" fill="#f0f0f0" stroke="#808080"/>
<rect x="36" y="929" width="16" height="88" fill="url(#lg)"/>
<rect x="52" y="929" width="751" height="82" fill="#fff"/>
<path d="M52 1011.5H803" stroke="#666"/>
<path d="M39.500 934.500l5 5M44.500 934.500l-5 5" stroke="#111" stroke-width="1.6"/>
<path d="M44 947v6l-3-3z" fill="#333"/>
<path d="M39 967h8M43 963v4M40.500 963h5" stroke="#222" fill="none"/>
<text transform="translate(47,1006) rotate(-90)" textLength="33" lengthAdjust="spacingAndGlyphs">Command</text>
<rect x="39" y="1010" width="3" height="3" class="grip"/><rect x="44" y="1010" width="3" height="3" class="grip"/>
<text x="53.500" y="941" textLength="138" lengthAdjust="spacingAndGlyphs">last pick:  17.7800  104.1400</text>
<text x="53.500" y="954" textLength="138" lengthAdjust="spacingAndGlyphs">last pick:  17.7800  104.1400</text>
<text x="53.500" y="967" textLength="138" lengthAdjust="spacingAndGlyphs">last pick:  17.7800  104.1400</text>
<text x="53.500" y="980" textLength="138" lengthAdjust="spacingAndGlyphs">last pick:  17.7800  104.1400</text>
<text x="53.500" y="993" textLength="357" lengthAdjust="spacingAndGlyphs">E- (SPMHGE-616): Symbol and layer embedding requirements do not match.</text>
<text x="53.500" y="1006" textLength="55" lengthAdjust="spacingAndGlyphs">Command &gt;</text>
<!-- scrollbar -->
<rect x="803" y="929" width="17" height="82" fill="#ececec"/>
<rect x="803" y="929" width="17" height="16" fill="#f0f0f0" stroke="#888"/><path d="M807 940h8l-4-6z" fill="#111"/>
<rect x="803" y="987" width="17" height="7" fill="#f0f0f0" stroke="#aaa"/>
<rect x="803" y="995" width="17" height="16" fill="#f0f0f0" stroke="#888"/><path d="M807 1000h8l-4 6z" fill="#111"/>
<!-- world view -->
<rect x="826.500" y="928.500" width="785" height="89" fill="#e4e4e4" stroke="#a8a8a8"/>
<rect x="827" y="929" width="17" height="88" fill="url(#lg)"/>
<rect x="845" y="932" width="765" height="84" fill="#fff"/>
<rect x="846" y="933" width="762" height="81" fill="#000"/>
<path d="M831.500 934.500l5 5M836.500 934.500l-5 5" stroke="#111" stroke-width="1.6"/>
<path d="M836 947v6l-3-3z" fill="#333"/>
<path d="M831 967h8M835 963v4M832.500 963h5" stroke="#222" fill="none"/>
<text transform="translate(839,1006) rotate(-90)" textLength="33" lengthAdjust="spacingAndGlyphs">WorldVi</text>
<rect x="831" y="1010" width="3" height="3" class="grip"/><rect x="836" y="1010" width="3" height="3" class="grip"/>
<g fill="none" stroke="#b8b8b8" shape-rendering="crispEdges"><circle cx="936" cy="971" r="37.500"/><circle cx="936" cy="971" r="34.500"/><circle cx="936" cy="971" r="18.500"/><circle cx="936" cy="971" r="13.500"/></g>
<rect x="935" y="937" width="10" height="6" fill="#000" stroke="#5f8a3a"/><rect x="938" y="939" width="4" height="2" fill="#fff"/>

<!-- status bar -->
<rect y="1022" width="1918" height="2" fill="#8c8c8c"/>
<rect y="1024" width="1918" height="16" fill="#f0f0f0"/>
<rect y="1040" width="1918" height="1" fill="#2a3442"/>
<path class="sep" d="M1001 1024V1039M1054.500 1024V1039M1188 1024V1039M1311 1024V1039M1444 1024V1039M1481 1024V1039M1583 1024V1039M1627 1024V1039M1750 1024V1039M1824 1024V1039M1877 1024V1039"/>
<rect x="1002" y="1024" width="52" height="14" fill="#00ff00"/>
<rect x="1825" y="1024" width="50" height="15" fill="#ff0000"/>
<rect x="1445.500" y="1024.500" width="14" height="14" fill="#f0f0f0" stroke="#333"/><rect x="1463.500" y="1024.500" width="14" height="14" fill="#f0f0f0" stroke="#333"/>
<text x="2" y="1035" textLength="85" lengthAdjust="spacingAndGlyphs">swap components</text>
<text x="1240" y="1035" textLength="18" lengthAdjust="spacingAndGlyphs">Top</text>
<text x="1332" y="1035" textLength="91" lengthAdjust="spacingAndGlyphs">29.3370, 110.8710</text>
<text x="1449" y="1035">P</text><text x="1467" y="1035">A</text>
<text x="1519" y="1035" textLength="29" lengthAdjust="spacingAndGlyphs">- (null)</text>
<text x="1660" y="1035" textLength="57" lengthAdjust="spacingAndGlyphs">General edit</text>
<text x="1780" y="1035" textLength="14" lengthAdjust="spacingAndGlyphs">Off</text>
<text x="1838" y="1035" style="fill:#a00000" textLength="23" lengthAdjust="spacingAndGlyphs">DRC</text>
<text x="1895" y="1035">1</text>
<circle cx="1928" cy="1015" r="26" fill="url(#ball)" stroke="#e8f0e8" stroke-width="1.500"/>
<text x="1906" y="1020" style="font-size:15px;font-weight:bold;fill:#f4fff4">57</text>

<!-- taskbar -->
<rect y="1041" width="1918" height="20" fill="url(#task)"/>
<rect y="1041" width="1918" height="1" fill="#7fbde2"/>
<path d="M1296 1042h18l44 19h-20z" fill="#7fb4e0" opacity=".55"/>
<g clip-path="url(#tk)">
<circle cx="28" cy="1064" r="21" fill="#2a6ea8" stroke="#bcdcf0" stroke-width="1.500"/>
<path d="M18 1061V1054L27 1051V1061z" fill="#e04830"/><path d="M29 1051L38 1051V1061H29z" fill="#70b030"/>
<rect class="tb" x="58.500" y="1042" width="58" height="24" rx="3"/>
<rect class="tb" x="120.500" y="1042" width="58" height="24" rx="3"/>
<rect class="tb" x="182.500" y="1042" width="59" height="24" rx="3"/>
<rect class="tb" x="244.500" y="1042" width="58" height="24" rx="3"/>
<rect class="tb" x="306.500" y="1042" width="58" height="24" rx="3"/>
<rect class="tb" x="368.500" y="1042" width="58" height="24" rx="3"/>
<path d="M72 1066V1050H84L86 1052H100V1066z" fill="#f8e8a8" stroke="#c8b070"/><path d="M76 1048h18v4H76z" fill="#f4f4e8"/><rect x="75" y="1047" width="3" height="3" fill="#30b040"/><rect x="84" y="1048" width="3" height="3" fill="#d05030"/><rect x="91" y="1049" width="3" height="3" fill="#3080e0"/>
<circle cx="138" cy="1046" r="3.500" fill="#10d030"/><circle cx="138" cy="1057" r="3.500" fill="#10d030"/><path d="M141 1046L152 1052M141 1057L150 1057" stroke="#10a030" stroke-width="2"/><path d="M148 1062L158 1047L160 1062M151 1057H160" fill="none" stroke="#e01010" stroke-width="3"/>
<rect x="195" y="1046" width="31" height="20" fill="#a8a8a8" stroke="#333"/><rect x="202" y="1051" width="10" height="12" fill="#00f0f0" stroke="#333"/><path d="M202 1049h10" stroke="#111" stroke-dasharray="1 1"/><path d="M216 1048H224M216 1053H224M219 1048V1053" stroke="#e01010"/>
<rect x="257" y="1044" width="32" height="18" fill="#f4f0ec"/><path d="M262 1062V1050Q266 1044 273 1044Q282 1046 285 1056V1062H281Q282 1052 275 1050Q268 1052 268 1062z" fill="#1a1414"/><path d="M268 1062Q268 1052 275 1050Q281 1052 281 1062z" fill="#e8b8a4"/>
<rect x="325" y="1046" width="22" height="18" fill="#c8dcf0" stroke="#7090b0"/><rect x="326" y="1047" width="20" height="4" fill="#f0b040"/><rect x="338" y="1053" width="6" height="8" fill="#dce8f4" stroke="#557"/>
<circle cx="396" cy="1064" r="15" fill="#78c850" stroke="#e8f4d8" stroke-width="2"/><path d="M388 1060L396 1052L404 1060z" fill="#fff"/><path d="M402 1047Q408 1043 411 1047" fill="none" stroke="#50a830" stroke-width="2"/>
<rect x="1627" y="1056" width="14" height="8" fill="#9aa8b8" stroke="#ccd"/><path d="M1622 1051Q1630 1046 1634 1052" fill="none" stroke="#c4d0dc" stroke-width="1"/>
<rect x="1648" y="1050" width="7" height="5" fill="none" stroke="#fff" stroke-width="1.200"/><rect x="1646" y="1052" width="7" height="5" fill="#1f5a9c" stroke="#fff" stroke-width="1.200"/>
<path d="M1664 1061l4-5l4 5z" fill="#fff"/>
<path d="M1687 1057l6-4l6 4v8h-12z" fill="#e8f4e8" stroke="#208040"/>
<circle cx="1717" cy="1062" r="8" fill="#e8d020" stroke="#a89010"/><path d="M1712 1062h10M1717 1057v10" stroke="#108030" stroke-width="2.500"/>
<path d="M1737 1060l6-6v10z" fill="#f0f0f0"/><path d="M1745 1058l4 3" stroke="#e02020" stroke-width="2.500"/>
<rect x="1761" y="1054" width="6" height="6" fill="none" stroke="#fff" stroke-width="1.300"/><rect x="1768" y="1057" width="6" height="6" fill="none" stroke="#fff" stroke-width="1.300"/>
<rect x="1781" y="1053" width="15" height="10" fill="#c83030" stroke="#eee" stroke-dasharray="2 1"/>
<ellipse cx="1813" cy="1059" rx="5" ry="6" fill="#111"/><circle cx="1813" cy="1055" r="3.500" fill="#222"/><path d="M1810 1057h6l-3 2z" fill="#f0a020"/><path d="M1808 1061h10v2h-10z" fill="#d02020"/>
</g>
<text x="1855" y="1057" style="font-size:14px;fill:#e4ecf6" textLength="23" lengthAdjust="spacingAndGlyphs">8:49</text>
<rect x="1905" y="1041" width="13" height="20" fill="#2c5f98" stroke="#6d93bd"/>
</svg>
</body></html>
